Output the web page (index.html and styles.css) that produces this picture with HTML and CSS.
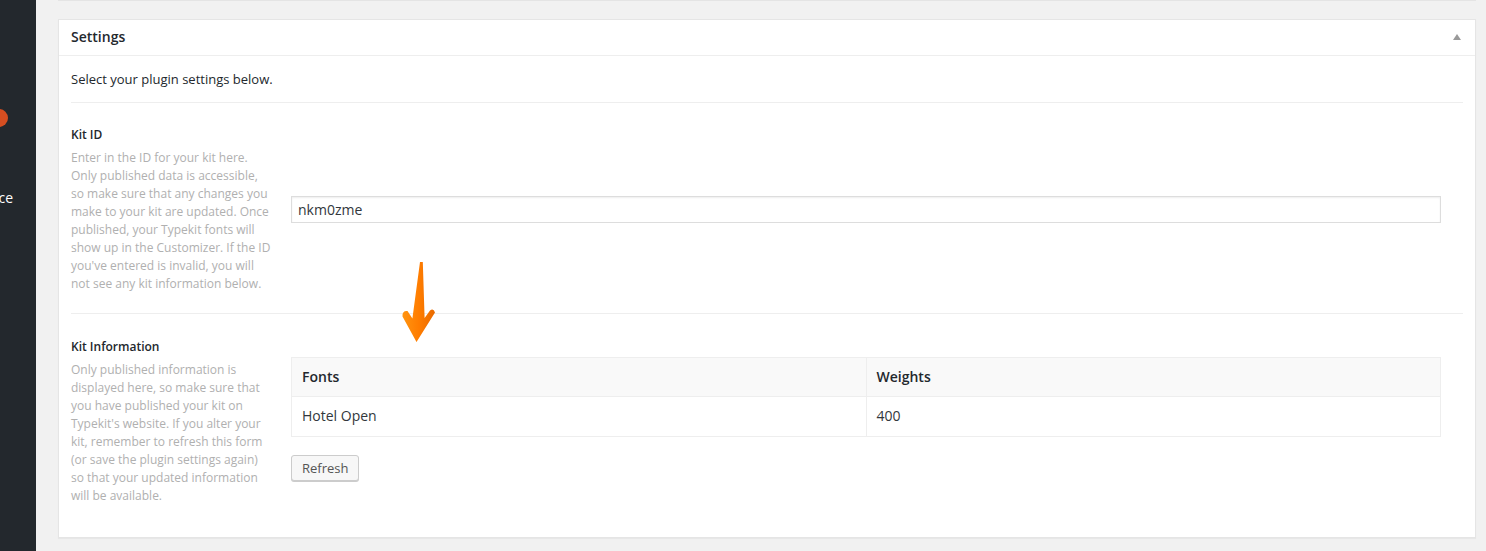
FILE: index.html
```html
<!DOCTYPE html>
<html>
<head>
<meta charset="utf-8">
<link rel="stylesheet" href="styles.css">
</head>
<body>
<div class="layout">
  <aside class="sidebar">
    <span class="badge"></span>
    <div class="menu-item"><span>Appearance</span></div>
  </aside>
  <main class="main">
    <div class="prev-box"></div>
    <section class="panel">
      <header class="panel-head">
        <h2 class="panel-title">Settings</h2>
        <span class="toggle"></span>
      </header>
      <div class="panel-body">
        <p class="intro">Select your plugin settings below.</p>
        <div class="row row-first">
          <div class="row-label">
            <div class="label">Kit ID</div>
            <div class="desc">Enter in the ID for your kit here. Only published data is accessible, so make sure that any changes you make to your kit are updated. Once published, your Typekit fonts will show up in the Customizer. If the ID you've entered is invalid, you will not see any kit information below.</div>
          </div>
          <div class="row-field">
            <input class="text-input" type="text" value="nkm0zme">
          </div>
        </div>
        <div class="row row-second">
          <div class="row-label">
            <div class="label">Kit Information</div>
            <div class="desc">Only published information is displayed here, so make sure that you have published your kit on Typekit's website. If you alter your kit, remember to refresh this form (or save the plugin settings again) so that your updated information will be available.</div>
          </div>
          <div class="row-field field-top">
            <table class="kit-table">
              <thead>
                <tr><th>Fonts</th><th>Weights</th></tr>
              </thead>
              <tbody>
                <tr><td>Hotel Open</td><td>400</td></tr>
              </tbody>
            </table>
            <button class="button" type="button">Refresh</button>
          </div>
        </div>
      </div>
      <svg class="arrow" width="40" height="88" viewBox="0 0 40 88">
        <defs>
          <linearGradient id="ag" x1="0" y1="0" x2="1" y2="0">
            <stop offset="0" stop-color="#ff9410"/>
            <stop offset="0.5" stop-color="#ff7d00"/>
            <stop offset="1" stop-color="#e96a00"/>
          </linearGradient>
        </defs>
        <path d="M22 4 L24.8 4 L26.6 60 L32 52.5 Q35.5 50 37 54.5 L18.5 84 L4.5 58.5 Q4 52.5 9.5 53 L14.4 60.5 Z" fill="url(#ag)"/>
      </svg>
    </section>
  </main>
</div>
</body>
</html>
```

FILE: styles.css
```css
html, body {
  margin: 0;
  padding: 0;
  height: 100%;
}
body {
  background: #f1f1f1;
  font-family: "Open Sans", "Noto Sans", sans-serif;
  color: #32373c;
  overflow: hidden;
}
.layout {
  display: flex;
  height: 551px;
}
.sidebar {
  width: 36px;
  flex: 0 0 36px;
  background: #23282d;
  position: relative;
  overflow: hidden;
}
.badge {
  position: absolute;
  left: -10px;
  top: 109px;
  width: 18px;
  height: 18px;
  border-radius: 50%;
  background: #d54e21;
}
.menu-item {
  position: absolute;
  left: 0;
  right: 0;
  top: 188px;
  display: flex;
  justify-content: flex-end;
  padding-right: 23px;
  color: #fff;
  font-size: 14px;
  line-height: 20px;
  white-space: nowrap;
}
.main {
  flex: 1;
  padding: 0 10px 0 22px;
}
.prev-box {
  height: 0;
  border-bottom: 1px solid #e4e4e4;
  margin-bottom: 18px;
}
.panel {
  position: relative;
  background: #fff;
  border: 1px solid #e5e5e5;
  box-shadow: 0 1px 1px rgba(0,0,0,.04);
  height: 519px;
  box-sizing: border-box;
}
.panel-head {
  height: 36px;
  box-sizing: border-box;
  border-bottom: 1px solid #eee;
  display: flex;
  align-items: center;
  justify-content: space-between;
  padding: 0 14px 2px 12px;
}
.panel-title {
  margin: 0;
  font-size: 14px;
  font-weight: 600;
  color: #23282d;
  line-height: 20px;
}
.toggle {
  width: 0;
  height: 0;
  border-left: 4px solid transparent;
  border-right: 4px solid transparent;
  border-bottom: 6px solid #9a9a9a;
}
.panel-body {
  padding: 0 12px;
}
.intro {
  margin: 0;
  padding: 14px 0 14px;
  font-size: 13px;
  line-height: 18px;
  color: #23282d;
  border-bottom: 1px solid #eee;
}
.row {
  display: grid;
  grid-template-columns: 200px 1150px;
  column-gap: 20px;
  align-items: center;
}
.row-first {
  padding: 23px 0 20px;
  border-bottom: 1px solid #eee;
}
.row-second {
  padding: 24px 0 20px;
  align-items: start;
}
.field-top {
  margin-top: 19px;
}
.label {
  font-size: 12px;
  font-weight: 600;
  line-height: 18px;
  color: #23282d;
}
.desc {
  margin-top: 5px;
  font-size: 12px;
  line-height: 18px;
  color: #b0b0b0;
}
.text-input {
  display: block;
  width: 100%;
  height: 27px;
  box-sizing: border-box;
  border: 1px solid #ddd;
  box-shadow: inset 0 1px 2px rgba(0,0,0,.07);
  padding: 0 6px;
  font-family: "Open Sans", "Noto Sans", sans-serif;
  font-size: 14px;
  color: #32373c;
  background: #fff;
  outline: none;
}
.kit-table {
  width: 100%;
  border-collapse: collapse;
  border: 1px solid #eee;
  table-layout: fixed;
  font-size: 14px;
}
.kit-table th,
.kit-table td {
  text-align: left;
  padding: 9px 10px;
  line-height: 20px;
  border: 1px solid #eee;
}
.kit-table th {
  background: #f9f9f9;
  font-weight: 600;
  color: #23282d;
}
.kit-table td {
  color: #32373c;
  padding-bottom: 10px;
}
.button {
  display: block;
  margin-top: 18px;
  height: 26px;
  padding: 0 10px;
  border: 1px solid #ccc;
  border-radius: 3px;
  background: #f7f7f7;
  box-shadow: 0 1px 0 #ccc;
  font-family: "Open Sans", "Noto Sans", sans-serif;
  font-size: 13px;
  color: #555;
  cursor: pointer;
}
.arrow {
  position: absolute;
  left: 339px;
  top: 238px;
}
```
